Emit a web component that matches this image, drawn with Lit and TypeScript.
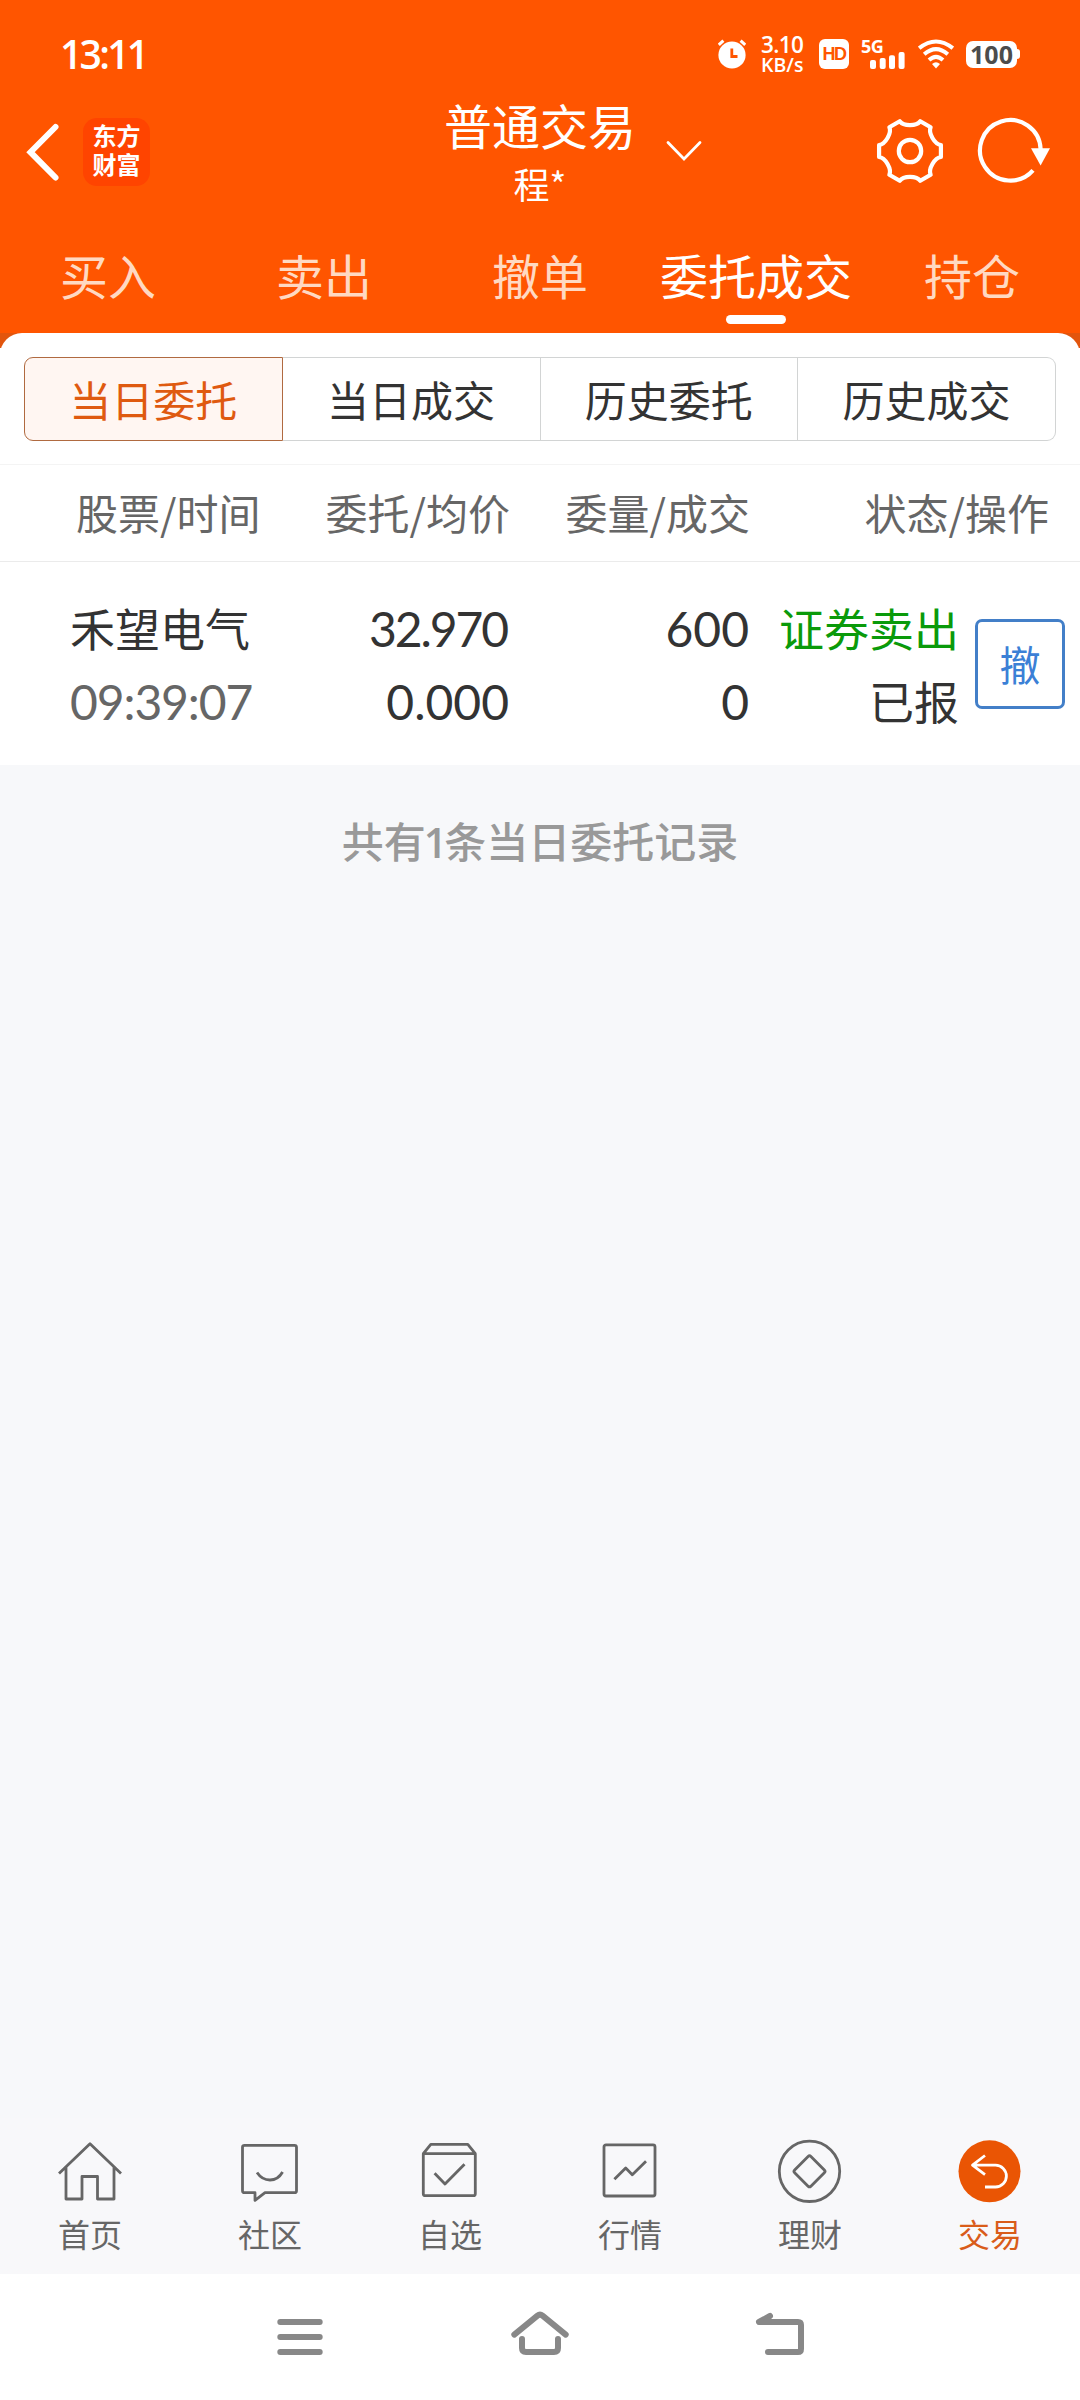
import { LitElement, html, css, svg } from "lit";
import { customElement, property, state } from "lit/decorators.js";
import { classMap } from "lit/directives/class-map.js";

/* Six-toothed gear outline around (36, 36). */
function gearPath(): string {
  const at = (r: number, deg: number) => {
    const a = (deg * Math.PI) / 180;
    return `${(36 + r * Math.cos(a)).toFixed(2)} ${(36 + r * Math.sin(a)).toFixed(2)}`;
  };
  let d = `M${at(31.5, -11)}`;
  for (let t = 0; t < 360; t += 60) {
    d += `L${at(31.5, t + 11)}C${at(25.5, t + 15)} ${at(25.5, t + 45)} ${at(31.5, t + 49)}`;
  }
  return d + "Z";
}

@customElement("status-bar")
class StatusBar extends LitElement {
  static styles = css`
    :host {
      display: flex;
      align-items: center;
      height: 96px;
      padding: 12px 60px 0 60px;
      box-sizing: border-box;
      color: #fff;
      font-family: "Open Sans", "Noto Sans", sans-serif;
    }
    svg { display: block; flex: none; }
    .time { flex: 1; font-size: 39px; font-weight: 600; line-height: 50px; letter-spacing: -2.7px; }
    .alarm { margin-right: 15px; }
    .speed { width: 43px; margin-right: 15px; font-weight: 600; white-space: nowrap; }
    .rate { font-size: 22.5px; line-height: 20px; letter-spacing: -0.6px; }
    .unit { font-size: 19.5px; line-height: 19px; }
    .hd {
      width: 30px; height: 30px; margin-right: 12px; border-radius: 6px; background: #fff; color: #ff5500;
      font: 700 18px/31px "Liberation Sans", sans-serif; text-align: center; letter-spacing: -1.5px;
    }
    .signal { display: flex; width: 44px; height: 30px; margin-right: 13px; }
    .gen { font-size: 18px; font-weight: 700; line-height: 14px; width: 9px; letter-spacing: -0.5px; }
    .wifi { margin-right: 12px; }
    .battery { display: flex; align-items: center; width: 54px; }
    .cell {
      width: 51px; height: 27px; border-radius: 7px; background: #fff; color: #4c4c4c;
      font-size: 25px; font-weight: 700; line-height: 27px; text-align: center;
    }
    .nub { width: 3px; height: 10px; border-radius: 0 3px 3px 0; background: #fff; }
  `;
  render() {
    return html`
      <div class="time">13:11</div>
      <svg class="alarm" width="28" height="30" viewBox="0 0 28 30">
        <circle cx="14" cy="16" r="13.6" fill="#fff" />
        <path d="M0.8 5.8L5.4 1.6M22.6 1.6L27.2 5.8" stroke="#fff" stroke-width="3" />
        <path d="M13.8 9.5V17.5H19.5" fill="none" stroke="#ff5500" stroke-width="2.8" />
      </svg>
      <div class="speed"><div class="rate">3.10</div><div class="unit">KB/s</div></div>
      <div class="hd">HD</div>
      <div class="signal">
        <span class="gen">5G</span>
        <svg width="35" height="30" viewBox="0 0 35 30" fill="#fff">
          <rect x="0" y="21" width="6" height="9" rx="2" />
          <rect x="9.7" y="19" width="6" height="11" rx="2" />
          <rect x="19" y="16.3" width="6" height="13.7" rx="2" />
          <rect x="28.6" y="13" width="6" height="17" rx="2" />
        </svg>
      </div>
      <svg class="wifi" width="36" height="30" viewBox="0 0 36 30" fill="none" stroke="#fff" stroke-width="4">
        <path d="M1.2 9.2Q18 -4.2 34.8 9.2" />
        <path d="M6.2 15.2Q18 5 29.8 15.2" />
        <path d="M11 21Q18 14.6 25 21" />
        <path d="M14 25Q18 21.6 22 25L18 29.6Z" fill="#fff" stroke="none" />
      </svg>
      <div class="battery"><div class="cell">100</div><div class="nub"></div></div>
    `;
  }
}

@customElement("title-bar")
class TitleBar extends LitElement {
  static styles = css`
    :host {
      display: grid;
      grid-template-columns: 1fr auto 1fr;
      grid-template-rows: 112px;
      align-items: center;
      height: 112px;
      color: #fff;
      font-family: "Noto Sans CJK SC", sans-serif;
    }
    svg { display: block; flex: none; }
    .left { display: flex; align-items: center; padding: 0 0 1px 24px; gap: 19px; }
    .logo {
      box-sizing: border-box; width: 67px; height: 68px; padding-top: 2px; border-radius: 14px; background: #ff4400;
      font-size: 24px; font-weight: 700; line-height: 29.5px; text-align: center;
    }
    .title { text-align: center; padding-top: 1px; }
    .name { font-size: 48px; line-height: 60px; }
    .user { font-size: 36px; line-height: 58px; }
    .right { display: flex; align-items: center; padding: 0 28px 2px 30px; }
    .gear { margin-left: auto; margin-right: 30px; }
  `;
  render() {
    return html`
      <div class="left">
        <svg width="40" height="60" viewBox="0 0 40 60" fill="none" stroke="#fff" stroke-width="6" stroke-linecap="round">
          <path d="M31.5 5L6.5 30.2L31.5 55.5" />
        </svg>
        <div class="logo">东方<br />财富</div>
      </div>
      <div class="title">
        <div class="name">普通交易</div>
        <div class="user">程*</div>
      </div>
      <div class="right">
        <svg width="36" height="24" viewBox="0 0 36 24" fill="none" stroke="#fff" stroke-width="2.8" stroke-linecap="round">
          <path d="M2 3.5L18 20L34 3.5" />
        </svg>
        <svg class="gear" width="72" height="72" viewBox="0 0 72 72" fill="none" stroke="#fff" stroke-width="4.2" stroke-linejoin="round">
          <path d=${gearPath()} />
          <circle cx="36" cy="36" r="11.2" />
        </svg>
        <svg width="76" height="72" viewBox="0 0 76 72" fill="none">
          <path d="M57 55.4A30.3 30.3 0 1 1 64.6 34" stroke="#fff" stroke-width="4.2" />
          <path d="M55 33.2H74L64.6 50.4Z" fill="#fff" />
        </svg>
      </div>
    `;
  }
}

@customElement("trade-tabs")
class TradeTabs extends LitElement {
  @property({ type: Array }) items: string[] = [];
  @state() private active = 3;
  static styles = css`
    :host { display: flex; height: 125px; font-family: "Noto Sans CJK SC", sans-serif; }
    .tab {
      flex: 1; display: flex; flex-direction: column; align-items: center; justify-content: flex-end;
      padding-bottom: 9px; box-sizing: border-box; font-size: 48px; line-height: 60px; color: #ffd9c2; white-space: nowrap;
    }
    .tab::after { content: ""; width: 60px; height: 9px; margin-top: 11px; border-radius: 5px; }
    .on { color: #fff; }
    .on::after { background: #fff; }
  `;
  render() {
    return this.items.map(
      (label, i) => html`<div class=${classMap({ tab: true, on: i === this.active })} @click=${() => (this.active = i)}>${label}</div>`
    );
  }
}

@customElement("segment-control")
class SegmentControl extends LitElement {
  @property({ type: Array }) items: string[] = [];
  @state() private active = 0;
  static styles = css`
    :host { display: flex; margin: 0 24px; height: 84px; font-family: "Noto Sans CJK SC", sans-serif; }
    .seg {
      flex: 1 1 0; box-sizing: border-box; border: 1px solid #d2d4d4; border-left-width: 0;
      font-size: 42px; line-height: 81px; text-align: center; color: #333;
    }
    .seg:first-child { border-left-width: 1px; border-radius: 9px 0 0 9px; }
    .seg:last-child { border-radius: 0 9px 9px 0; }
    .seg.on { border-color: #b06a40; background: #fff6f2; color: #df5a10; }
  `;
  render() {
    return this.items.map(
      (label, i) => html`<div class=${classMap({ seg: true, on: i === this.active })} @click=${() => (this.active = i)}>${label}</div>`
    );
  }
}

interface Order {
  name: string; time: string; price: string; avg: string; qty: string; filled: string; side: string; status: string;
}

@customElement("order-table")
class OrderTable extends LitElement {
  @property({ type: Array }) orders: Order[] = [];
  static styles = css`
    :host { display: block; font-family: "Noto Sans CJK SC", sans-serif; color: #333; }
    .head, .row { display: grid; grid-template-columns: 270px 240px 240px 1fr; text-align: right; white-space: nowrap; }
    .head {
      box-sizing: border-box; height: 98px; border-top: 1px solid #f4f4f4; border-bottom: 1px solid #ebebeb;
      font-size: 42px; line-height: 94px; color: #666;
    }
    .head .first { padding-left: 76px; }
    .head .last { padding-right: 31px; }
    .first { text-align: left; }
    .row { box-sizing: border-box; height: 203px; padding-top: 29px; font-size: 45px; line-height: 73px; }
    .row .first { padding-left: 70px; }
    .num { font-family: Lato, sans-serif; font-size: 48px; padding-right: 1px; position: relative; top: 1px; }
    .time { color: #666; letter-spacing: -1.1px; }
    .price { letter-spacing: -2.1px; padding-right: 3px; }
    .state { display: flex; justify-content: flex-end; align-items: flex-start; padding-right: 15px; gap: 16px; }
    .sell { color: #0a9a0a; }
    .cancel {
      box-sizing: border-box; width: 90px; height: 90px; margin-top: 28px; border: 3px solid #437fc8; border-radius: 7px;
      font-size: 41px; line-height: 83px; text-align: center; color: #3b80d6;
    }
  `;
  render() {
    return html`
      <div class="head">
        <div class="first">股票/时间</div><div>委托/均价</div><div>委量/成交</div><div class="last">状态/操作</div>
      </div>
      ${this.orders.map(
        (o) => html`<div class="row">
          <div class="first"><div>${o.name}</div><div class="num time">${o.time}</div></div>
          <div><div class="num price">${o.price}</div><div class="num">${o.avg}</div></div>
          <div><div class="num">${o.qty}</div><div class="num">${o.filled}</div></div>
          <div class="state">
            <div><div class="sell">${o.side}</div><div>${o.status}</div></div>
            <div class="cancel">撤</div>
          </div>
        </div>`
      )}
    `;
  }
}

const NAV = [
  { label: "首页", icon: svg`<path d="M5 37.5L36 7.8L67 37.5M12 31.5V63H28V40.5H43.5V63H60V31.5" />` },
  { label: "社区", icon: svg`<path d="M10.5 9.3H60.5Q62.5 9.3 62.5 11.3V54.7Q62.5 56.7 60.5 56.7H31L21 64.3V56.7H10.5Q8.5 56.7 8.5 54.7V11.3Q8.5 9.3 10.5 9.3ZM23 36.5Q28 44 36 44T48.6 36" />` },
  { label: "自选", icon: svg`<path d="M9.3 17.7H61.3V57.7Q61.3 59.7 59.3 59.7H11.3Q9.3 59.7 9.3 57.7ZM9.3 17.7L16.8 8.3H53.8L61.3 17.7M20.6 37.3L31 48L50.5 28.3" />` },
  { label: "行情", icon: svg`<rect x="10" y="8.8" width="51" height="51.2" rx="2" /><path d="M20.4 43.3L31.7 31.9L38.3 38.7L52 25.3" />` },
  { label: "理财", icon: svg`<circle cx="35.5" cy="35.3" r="30.2" /><rect x="24" y="23.8" width="23" height="23" rx="2" transform="rotate(45 35.5 35.3)" />` },
  { label: "交易", icon: svg`<circle cx="35.5" cy="35.3" r="31" fill="#ea5504" stroke="none" /><path d="M31 19.5L18.5 29.2L31 38.6M18.5 29.2H41.5A10.9 10.9 0 0 1 41.5 51H31" stroke="#fff" />` },
];

@customElement("bottom-nav")
class BottomNav extends LitElement {
  static styles = css`
    :host { display: flex; height: 156px; padding-top: 18px; box-sizing: border-box; background: #f8f8fa; font-family: "Noto Sans CJK SC", sans-serif; }
    .item { flex: 1; display: flex; flex-direction: column; align-items: center; font-size: 32px; line-height: 50px; color: #666; }
    .on { color: #d95c1a; }
    svg { display: block; fill: none; stroke: #666; stroke-width: 2.8; stroke-linejoin: round; }
  `;
  render() {
    return NAV.map(
      (n, i) => html`<div class=${classMap({ item: true, on: i === NAV.length - 1 })}>
        <svg width="72" height="72" viewBox="0 0 72 72">${n.icon}</svg><span>${n.label}</span>
      </div>`
    );
  }
}

@customElement("system-nav")
class SystemNav extends LitElement {
  static styles = css`
    :host { display: flex; justify-content: center; gap: 180px; height: 126px; padding-top: 33px; box-sizing: border-box; background: #fff; }
    svg { display: block; fill: none; stroke: #888; stroke-width: 6; stroke-linecap: round; stroke-linejoin: round; }
  `;
  render() {
    return html`
      <svg width="60" height="60" viewBox="0 0 60 60"><path d="M10.3 15H49.7M10.3 30H49.7M10.3 45H49.7" /></svg>
      <svg width="60" height="60" viewBox="0 0 60 60"><path d="M4.3 27.6L27.5 8.6Q30 6.6 32.5 8.6L55.7 27.6M12 32V41Q12 45 16 45H44Q48 45 48 41V32" /></svg>
      <svg width="60" height="60" viewBox="0 0 60 60"><path d="M20 9L9 15H48Q51 15 51 18V42Q51 45 48 45H18" /><path d="M20 9.5L12 14H20Z" fill="#888" stroke="none" /></svg>
    `;
  }
}

@customElement("app-root")
class AppRoot extends LitElement {
  static styles = css`
    :host { display: flex; flex-direction: column; width: 1080px; height: 2400px; overflow: hidden; background: #f7f8fa; }
    .header { background: #ff5500; }
    .backing { background: linear-gradient(#e2550d 15px, #fff 15px); }
    .panel { background: #fff; border-radius: 22px 22px 0 0; padding-top: 24px; }
    .orders { display: block; margin-top: 23px; }
    .summary {
      flex: 1; padding-top: 45px; text-align: center; color: #999;
      font: 500 42px/60px "Noto Sans CJK SC", sans-serif;
    }
    .one { font-family: "Open Sans", sans-serif; font-weight: 600; font-size: 41px; letter-spacing: -3px; margin-left: -2px; }
  `;
  private orders: Order[] = [
    { name: "禾望电气", time: "09:39:07", price: "32.970", avg: "0.000", qty: "600", filled: "0", side: "证券卖出", status: "已报" },
  ];
  render() {
    return html`
      <div class="header">
        <status-bar></status-bar>
        <title-bar></title-bar>
        <trade-tabs .items=${["买入", "卖出", "撤单", "委托成交", "持仓"]}></trade-tabs>
      </div>
      <div class="backing">
        <div class="panel">
          <segment-control .items=${["当日委托", "当日成交", "历史委托", "历史成交"]}></segment-control>
          <order-table class="orders" .orders=${this.orders}></order-table>
        </div>
      </div>
      <div class="summary">共有<span class="one">${this.orders.length}</span>条当日委托记录</div>
      <bottom-nav></bottom-nav>
      <system-nav></system-nav>
    `;
  }
}
